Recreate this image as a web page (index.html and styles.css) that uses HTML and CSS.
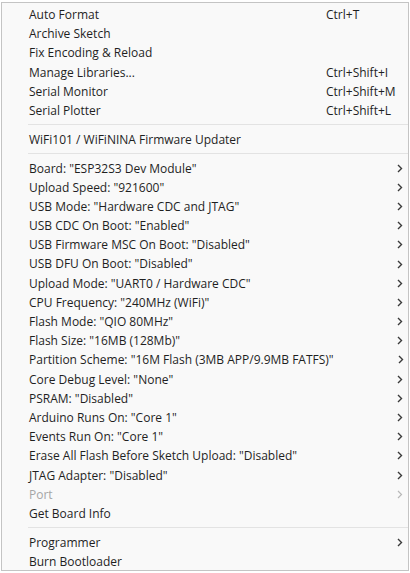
FILE: index.html
```html
<!DOCTYPE html>
<html>
<head>
<meta charset="utf-8">
<link rel="stylesheet" href="styles.css">
</head>
<body>
<div class="menu">
  <div class="item"><span class="label">Auto Format</span><span class="key">Ctrl+T</span><span class="arrow"></span></div>
  <div class="item"><span class="label">Archive Sketch</span><span class="key"></span><span class="arrow"></span></div>
  <div class="item"><span class="label">Fix Encoding &amp; Reload</span><span class="key"></span><span class="arrow"></span></div>
  <div class="item"><span class="label">Manage Libraries...</span><span class="key">Ctrl+Shift+I</span><span class="arrow"></span></div>
  <div class="item"><span class="label">Serial Monitor</span><span class="key">Ctrl+Shift+M</span><span class="arrow"></span></div>
  <div class="item"><span class="label">Serial Plotter</span><span class="key">Ctrl+Shift+L</span><span class="arrow"></span></div>
  <div class="sep"></div>
  <div class="item"><span class="label">WiFi101 / WiFiNINA Firmware Updater</span><span class="key"></span><span class="arrow"></span></div>
  <div class="sep"></div>
  <div class="item"><span class="label">Board: "ESP32S3 Dev Module"</span><span class="key"></span><span class="arrow"><svg width="6" height="9" viewBox="0 0 6 9"><polyline points="1,1 4.5,4.5 1,8" fill="none" stroke="currentColor" stroke-width="1.4"/></svg></span></div>
  <div class="item"><span class="label">Upload Speed: "921600"</span><span class="key"></span><span class="arrow"><svg width="6" height="9" viewBox="0 0 6 9"><polyline points="1,1 4.5,4.5 1,8" fill="none" stroke="currentColor" stroke-width="1.4"/></svg></span></div>
  <div class="item"><span class="label">USB Mode: "Hardware CDC and JTAG"</span><span class="key"></span><span class="arrow"><svg width="6" height="9" viewBox="0 0 6 9"><polyline points="1,1 4.5,4.5 1,8" fill="none" stroke="currentColor" stroke-width="1.4"/></svg></span></div>
  <div class="item"><span class="label">USB CDC On Boot: "Enabled"</span><span class="key"></span><span class="arrow"><svg width="6" height="9" viewBox="0 0 6 9"><polyline points="1,1 4.5,4.5 1,8" fill="none" stroke="currentColor" stroke-width="1.4"/></svg></span></div>
  <div class="item"><span class="label">USB Firmware MSC On Boot: "Disabled"</span><span class="key"></span><span class="arrow"><svg width="6" height="9" viewBox="0 0 6 9"><polyline points="1,1 4.5,4.5 1,8" fill="none" stroke="currentColor" stroke-width="1.4"/></svg></span></div>
  <div class="item"><span class="label">USB DFU On Boot: "Disabled"</span><span class="key"></span><span class="arrow"><svg width="6" height="9" viewBox="0 0 6 9"><polyline points="1,1 4.5,4.5 1,8" fill="none" stroke="currentColor" stroke-width="1.4"/></svg></span></div>
  <div class="item"><span class="label">Upload Mode: "UART0 / Hardware CDC"</span><span class="key"></span><span class="arrow"><svg width="6" height="9" viewBox="0 0 6 9"><polyline points="1,1 4.5,4.5 1,8" fill="none" stroke="currentColor" stroke-width="1.4"/></svg></span></div>
  <div class="item"><span class="label">CPU Frequency: "240MHz (WiFi)"</span><span class="key"></span><span class="arrow"><svg width="6" height="9" viewBox="0 0 6 9"><polyline points="1,1 4.5,4.5 1,8" fill="none" stroke="currentColor" stroke-width="1.4"/></svg></span></div>
  <div class="item"><span class="label">Flash Mode: "QIO 80MHz"</span><span class="key"></span><span class="arrow"><svg width="6" height="9" viewBox="0 0 6 9"><polyline points="1,1 4.5,4.5 1,8" fill="none" stroke="currentColor" stroke-width="1.4"/></svg></span></div>
  <div class="item"><span class="label">Flash Size: "16MB (128Mb)"</span><span class="key"></span><span class="arrow"><svg width="6" height="9" viewBox="0 0 6 9"><polyline points="1,1 4.5,4.5 1,8" fill="none" stroke="currentColor" stroke-width="1.4"/></svg></span></div>
  <div class="item"><span class="label">Partition Scheme: "16M Flash (3MB APP/9.9MB FATFS)"</span><span class="key"></span><span class="arrow"><svg width="6" height="9" viewBox="0 0 6 9"><polyline points="1,1 4.5,4.5 1,8" fill="none" stroke="currentColor" stroke-width="1.4"/></svg></span></div>
  <div class="item"><span class="label">Core Debug Level: "None"</span><span class="key"></span><span class="arrow"><svg width="6" height="9" viewBox="0 0 6 9"><polyline points="1,1 4.5,4.5 1,8" fill="none" stroke="currentColor" stroke-width="1.4"/></svg></span></div>
  <div class="item"><span class="label">PSRAM: "Disabled"</span><span class="key"></span><span class="arrow"><svg width="6" height="9" viewBox="0 0 6 9"><polyline points="1,1 4.5,4.5 1,8" fill="none" stroke="currentColor" stroke-width="1.4"/></svg></span></div>
  <div class="item"><span class="label">Arduino Runs On: "Core 1"</span><span class="key"></span><span class="arrow"><svg width="6" height="9" viewBox="0 0 6 9"><polyline points="1,1 4.5,4.5 1,8" fill="none" stroke="currentColor" stroke-width="1.4"/></svg></span></div>
  <div class="item"><span class="label">Events Run On: "Core 1"</span><span class="key"></span><span class="arrow"><svg width="6" height="9" viewBox="0 0 6 9"><polyline points="1,1 4.5,4.5 1,8" fill="none" stroke="currentColor" stroke-width="1.4"/></svg></span></div>
  <div class="item"><span class="label">Erase All Flash Before Sketch Upload: "Disabled"</span><span class="key"></span><span class="arrow"><svg width="6" height="9" viewBox="0 0 6 9"><polyline points="1,1 4.5,4.5 1,8" fill="none" stroke="currentColor" stroke-width="1.4"/></svg></span></div>
  <div class="item"><span class="label">JTAG Adapter: "Disabled"</span><span class="key"></span><span class="arrow"><svg width="6" height="9" viewBox="0 0 6 9"><polyline points="1,1 4.5,4.5 1,8" fill="none" stroke="currentColor" stroke-width="1.4"/></svg></span></div>
  <div class="item disabled"><span class="label">Port</span><span class="key"></span><span class="arrow"><svg width="6" height="9" viewBox="0 0 6 9"><polyline points="1,1 4.5,4.5 1,8" fill="none" stroke="currentColor" stroke-width="1.2"/></svg></span></div>
  <div class="item"><span class="label">Get Board Info</span><span class="key"></span><span class="arrow"></span></div>
  <div class="sep"></div>
  <div class="item"><span class="label">Programmer</span><span class="key"></span><span class="arrow"><svg width="6" height="9" viewBox="0 0 6 9"><polyline points="1,1 4.5,4.5 1,8" fill="none" stroke="currentColor" stroke-width="1.4"/></svg></span></div>
  <div class="item"><span class="label">Burn Bootloader</span><span class="key"></span><span class="arrow"></span></div>
</div>
</body>
</html>
```

FILE: styles.css
```css
html, body {
  margin: 0;
  padding: 0;
  background: #ffffff;
}
body {
  padding: 2px 1px 0 1px;
  font-family: "Open Sans", "Noto Sans", sans-serif;
  font-size: 12px;
  color: #1f1f1f;
}
.menu {
  width: 406px;
  height: 567px;
  border: 1px solid #c4c4c4;
  background: #f9f9f9;
  padding-top: 2px;
  box-sizing: content-box;
}
.menu {
  height: 565px;
}
.item {
  display: flex;
  align-items: center;
  height: 19.2px;
  line-height: 19.2px;
  padding-left: 27px;
}
.label {
  flex: 1;
  white-space: nowrap;
}
.key {
  width: 66px;
  white-space: nowrap;
}
.arrow {
  width: 16px;
  display: flex;
  justify-content: center;
  align-items: center;
  color: #3a3a3a;
}
.arrow svg {
  display: block;
}
.disabled {
  color: #a6a6a6;
}
.disabled .arrow {
  color: #b8b8b8;
}
.sep {
  height: 1px;
  background: #e3e3e3;
  margin: 4.3px 0 4.3px 26px;
}
```
